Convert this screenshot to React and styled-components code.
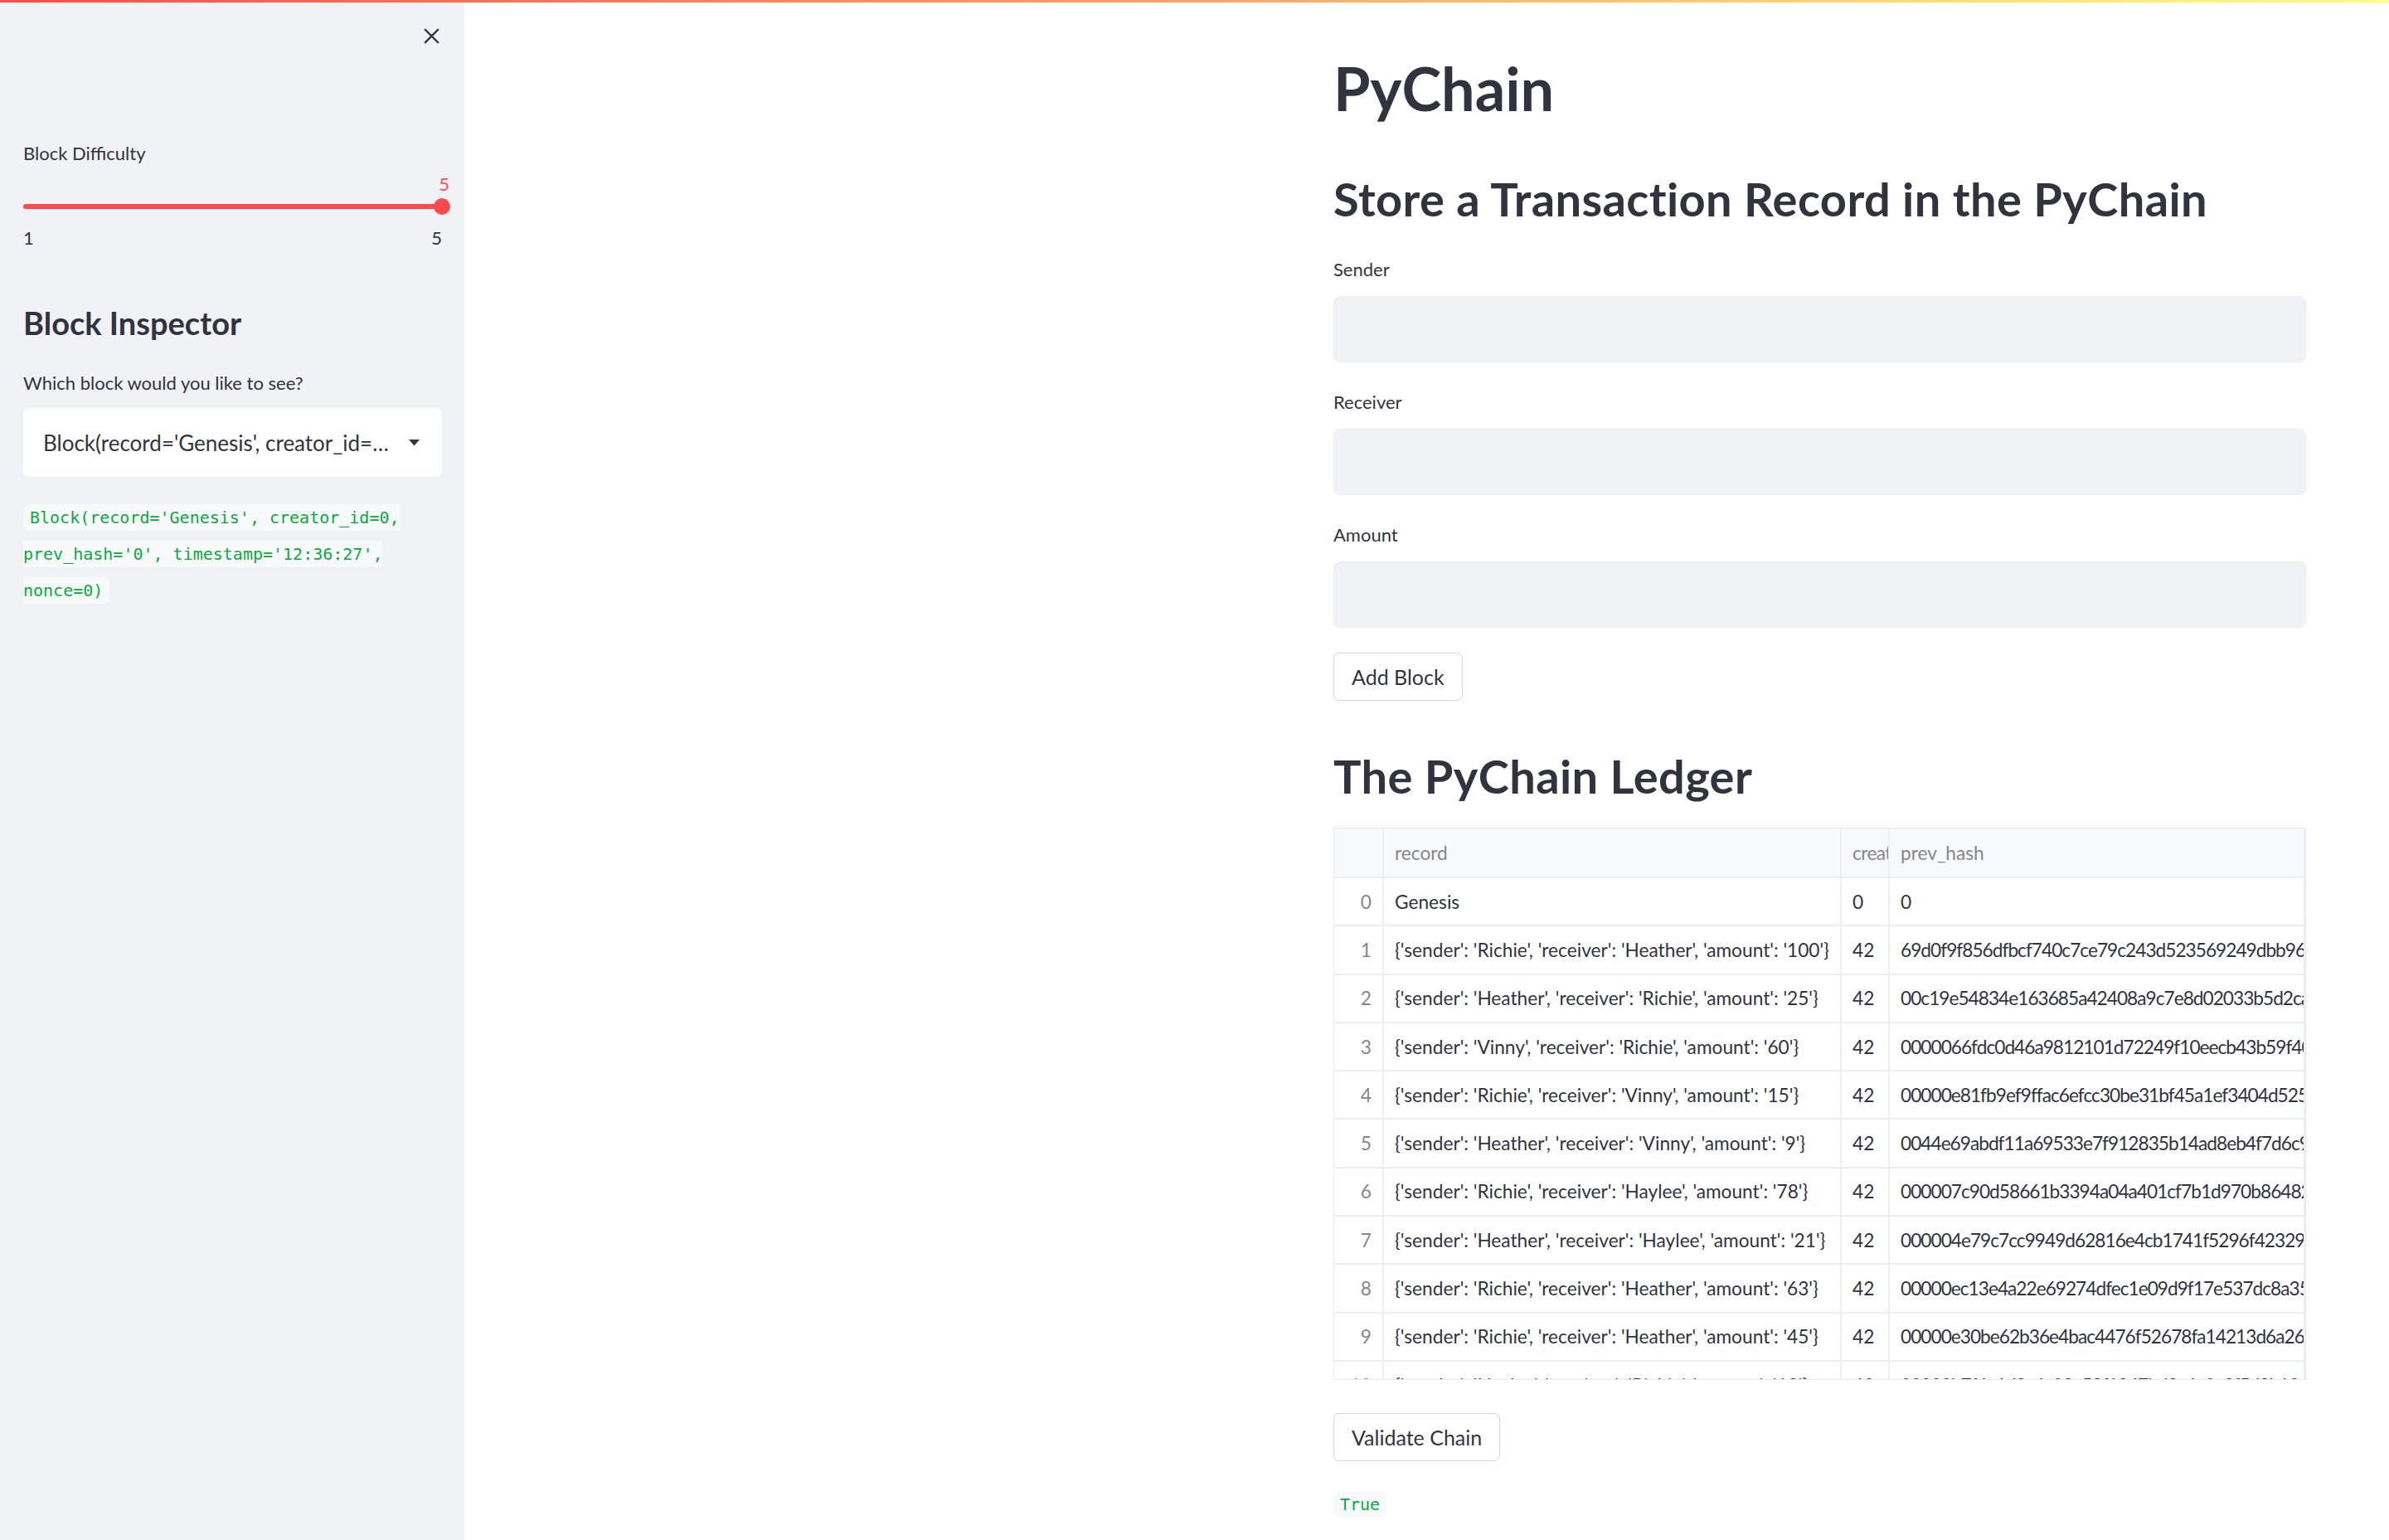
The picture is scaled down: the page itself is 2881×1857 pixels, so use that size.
import React from "react";
import styled, { createGlobalStyle } from "styled-components";

const GlobalStyle = createGlobalStyle`
  html, body { margin: 0; padding: 0; background: #ffffff; }
  body {
    font-family: Lato, "Noto Sans", sans-serif;
    color: #31333f;
  }
  * { box-sizing: border-box; }
`;

const Decoration = styled.div`
  position: fixed;
  top: 0;
  left: 0;
  right: 0;
  height: 3px;
  background: linear-gradient(90deg, #ff4b4b, #fffd80);
  z-index: 10;
`;

const Page = styled.div`
  display: flex;
  min-height: 1857px;
  width: 2881px;
`;

const Sidebar = styled.aside`
  width: 560px;
  flex: 0 0 560px;
  background: #f0f2f6;
  padding: 0 27px 0 28px;
  display: flex;
  flex-direction: column;
`;

const CloseRow = styled.div`
  height: 86px;
  display: flex;
  align-items: center;
  justify-content: flex-end;
  padding-right: 3px;
  color: #31333f;
`;

const Label = styled.div`
  font-size: 22px;
  line-height: 30px;
  margin-top: ${(p) => p.$mt || 0}px;
  color: #31333f;
`;

const SliderRow = styled.div`
  margin-top: 39px;
  height: 20px;
  display: flex;
  align-items: center;
  position: relative;
`;

const Track = styled.div`
  flex: 1;
  height: 6px;
  border-radius: 3px;
  background: #ff4b4b;
  margin-right: -10px;
`;

const Thumb = styled.div`
  width: 20px;
  height: 20px;
  border-radius: 50%;
  background: #ff4b4b;
  position: relative;
  margin-right: -10px;
`;

const ThumbValue = styled.span`
  position: absolute;
  bottom: 100%;
  left: 50%;
  transform: translateX(-30%);
  margin-bottom: 2px;
  font-size: 22px;
  line-height: 30px;
  color: #ff4b4b;
`;

const MinMax = styled.div`
  margin-top: 13px;
  display: flex;
  justify-content: space-between;
  font-size: 22px;
  line-height: 30px;
`;

const SideHeading = styled.h3`
  margin: 64px 0 0;
  font-size: 38px;
  line-height: 46px;
  font-weight: 700;
  color: #31333f;
`;

const Select = styled.div`
  margin-top: 15px;
  height: 83px;
  background: #ffffff;
  border-radius: 7px;
  display: flex;
  align-items: center;
  padding: 0 27px 0 24px;
  gap: 18px;
`;

const SelectValue = styled.span`
  flex: 1;
  min-width: 0;
  white-space: nowrap;
  overflow: hidden;
  text-overflow: ellipsis;
  font-size: 26px;
  color: #31333f;
`;

const CodePara = styled.p`
  margin: ${(p) => p.$mt}px 0 0;
  font-size: 20px;
  line-height: 43px;
`;

const Code = styled.code`
  font-family: "DejaVu Sans Mono", "Liberation Mono", monospace;
  font-size: 20px;
  color: #09ab3b;
  background: #f8f9fb;
  padding: 4px 8px;
  border-radius: 7px;
  -webkit-box-decoration-break: slice;
  box-decoration-break: slice;
`;

const Main = styled.main`
  flex: 1;
  padding-left: 1048px;
  display: flex;
  flex-direction: column;
`;

const Content = styled.div`
  width: 1173px;
  display: flex;
  flex-direction: column;
  align-items: flex-start;
`;

const Title = styled.h1`
  margin: 61px 0 0;
  font-size: 72px;
  line-height: 90px;
  font-weight: 700;
  color: #31333f;
`;

const Heading = styled.h2`
  margin: ${(p) => p.$mt}px 0 0;
  font-size: 56px;
  line-height: 72px;
  letter-spacing: 0.4px;
  font-weight: 700;
  color: #31333f;
`;

const Field = styled.div`
  width: 100%;
  margin-top: ${(p) => p.$mt}px;
  display: flex;
  flex-direction: column;
  gap: 17px;
`;

const Input = styled.div`
  height: 80px;
  width: 100%;
  background: #f0f2f6;
  border: 1px solid #eceef3;
  border-radius: 8px;
`;

const Button = styled.button`
  margin-top: ${(p) => p.$mt}px;
  height: 58px;
  padding: 0 21px;
  background: #ffffff;
  border: 1px solid #d6d6d9;
  border-radius: 7px;
  font-family: Lato, "Noto Sans", sans-serif;
  font-size: 25px;
  color: #31333f;
  cursor: pointer;
`;

const Table = styled.div`
  margin-top: 26px;
  width: 1173px;
  height: 666px;
  border: 1px solid #e6e9ef;
  overflow: hidden;
  display: flex;
  flex-direction: column;
`;

const Row = styled.div`
  display: grid;
  grid-template-columns: 60px 552px 58px 1fr;
  flex: 0 0 ${(p) => (p.$header ? "60px" : "58.3px")};
  background: ${(p) => (p.$header ? "#f8f9fb" : "#ffffff")};
`;

const Cell = styled.div`
  display: flex;
  align-items: center;
  justify-content: ${(p) => (p.$index ? "flex-end" : "flex-start")};
  padding: 0 13px;
  border-right: 2px solid #eceef2;
  border-bottom: 2px solid #eceef2;
  white-space: nowrap;
  overflow: hidden;
  font-size: 22.7px;
  letter-spacing: ${(p) => (p.$hash ? "-1px" : p.$tight ? "-0.6px" : "0")};
  color: ${(p) => (p.$muted ? "#85868d" : "#31333f")};
`;

const CloseIcon = () => (
  <svg width="19" height="19" viewBox="0 0 19 19" fill="none">
    <path d="M2 2 L17 17 M17 2 L2 17" stroke="#31333f" strokeWidth="2.4" strokeLinecap="square" />
  </svg>
);

const Caret = () => (
  <svg width="13" height="8" viewBox="0 0 13 8">
    <path d="M0 0 H13 L6.5 7.5 Z" fill="#31333f" />
  </svg>
);

const rows = [
  ["0", "Genesis", "0", "0"],
  ["1", "{'sender': 'Richie', 'receiver': 'Heather', 'amount': '100'}", "42", "69d0f9f856dfbcf740c7ce79c243d523569249dbb96a4e1"],
  ["2", "{'sender': 'Heather', 'receiver': 'Richie', 'amount': '25'}", "42", "00c19e54834e163685a42408a9c7e8d02033b5d2ca81f0"],
  ["3", "{'sender': 'Vinny', 'receiver': 'Richie', 'amount': '60'}", "42", "0000066fdc0d46a9812101d72249f10eecb43b59f40a2c"],
  ["4", "{'sender': 'Richie', 'receiver': 'Vinny', 'amount': '15'}", "42", "00000e81fb9ef9ffac6efcc30be31bf45a1ef3404d5253"],
  ["5", "{'sender': 'Heather', 'receiver': 'Vinny', 'amount': '9'}", "42", "0044e69abdf11a69533e7f912835b14ad8eb4f7d6c9b1"],
  ["6", "{'sender': 'Richie', 'receiver': 'Haylee', 'amount': '78'}", "42", "000007c90d58661b3394a04a401cf7b1d970b864827e"],
  ["7", "{'sender': 'Heather', 'receiver': 'Haylee', 'amount': '21'}", "42", "000004e79c7cc9949d62816e4cb1741f5296f4232931"],
  ["8", "{'sender': 'Richie', 'receiver': 'Heather', 'amount': '63'}", "42", "00000ec13e4a22e69274dfec1e09d9f17e537dc8a35d"],
  ["9", "{'sender': 'Richie', 'receiver': 'Heather', 'amount': '45'}", "42", "00000e30be62b36e4bac4476f52678fa14213d6a267c"],
  ["10", "{'sender': 'Haylee', 'receiver': 'Richie', 'amount': '12'}", "42", "00000b7f4e1d2a6c93e58f1047bd2c6e9a3f5d8b104e"],
];

export default function App() {
  return (
    <>
      <GlobalStyle />
      <Decoration />
      <Page>
        <Sidebar>
          <CloseRow>
            <CloseIcon />
          </CloseRow>
          <Label $mt={84}>Block Difficulty</Label>
          <SliderRow>
            <Track />
            <Thumb>
              <ThumbValue>5</ThumbValue>
            </Thumb>
          </SliderRow>
          <MinMax>
            <span>1</span>
            <span>5</span>
          </MinMax>
          <SideHeading>Block Inspector</SideHeading>
          <Label $mt={35}>Which block would you like to see?</Label>
          <Select>
            <SelectValue>
              Block(record='Genesis', creator_id=0, prev_hash='0', timestamp='12:36:27', nonce=0)
            </SelectValue>
            <Caret />
          </Select>
          <CodePara $mt={27}>
            <Code>Block(record='Genesis', creator_id=0, prev_hash='0', timestamp='12:36:27', nonce=0)</Code>
          </CodePara>
        </Sidebar>
        <Main>
          <Content>
            <Title>PyChain</Title>
            <Heading $mt={53}>Store a Transaction Record in the PyChain</Heading>
            <Field $mt={34}>
              <Label>Sender</Label>
              <Input />
            </Field>
            <Field $mt={33}>
              <Label>Receiver</Label>
              <Input />
            </Field>
            <Field $mt={33}>
              <Label>Amount</Label>
              <Input />
            </Field>
            <Button $mt={30}>Add Block</Button>
            <Heading $mt={55}>The PyChain Ledger</Heading>
            <Table>
              <Row $header>
                <Cell />
                <Cell $muted>record</Cell>
                <Cell $muted $tight>creator_id</Cell>
                <Cell $muted>prev_hash</Cell>
              </Row>
              {rows.map((r) => (
                <Row key={r[0]}>
                  <Cell $index $muted>{r[0]}</Cell>
                  <Cell>{r[1]}</Cell>
                  <Cell>{r[2]}</Cell>
                  <Cell $hash>{r[3]}</Cell>
                </Row>
              ))}
            </Table>
            <Button $mt={40}>Validate Chain</Button>
            <CodePara $mt={30}>
              <Code>True</Code>
            </CodePara>
          </Content>
        </Main>
      </Page>
    </>
  );
}
